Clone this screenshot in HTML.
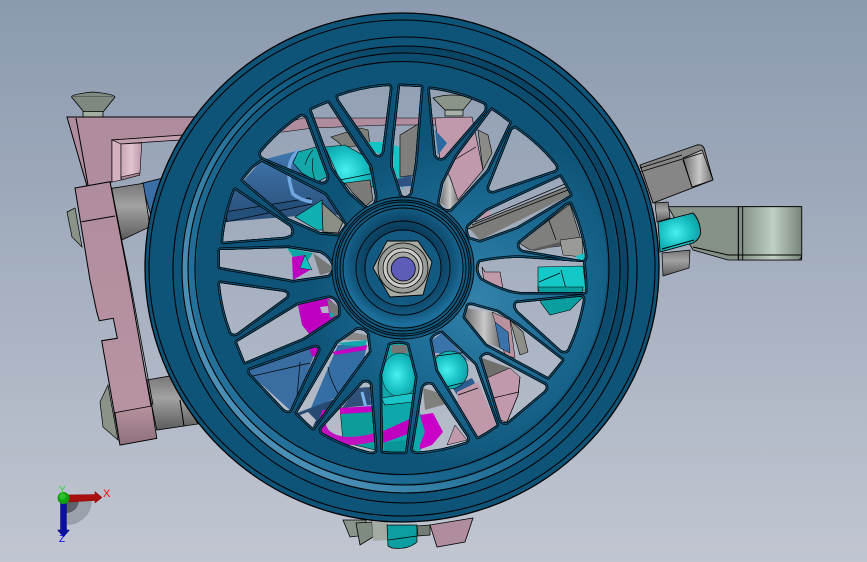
<!DOCTYPE html>
<html><head><meta charset="utf-8"><title>CAD wheel assembly</title>
<style>html,body{margin:0;padding:0;background:#a5afc0}svg{display:block}</style></head>
<body>
<svg xmlns="http://www.w3.org/2000/svg" width="867" height="562" viewBox="0 0 867 562">
<defs>
<linearGradient id="bg" x1="0" y1="0" x2="0" y2="1"><stop offset="0" stop-color="#8b9aaf"/><stop offset=".5" stop-color="#a6b0c0"/><stop offset="1" stop-color="#c1c6d1"/></linearGradient>
<linearGradient id="pink" x1="0" y1="0" x2="0" y2="1"><stop offset="0" stop-color="#b08d9e"/><stop offset="1" stop-color="#b893a4"/></linearGradient>
<linearGradient id="pinkb" x1="0" y1="0" x2="0" y2="1"><stop offset="0" stop-color="#b8929f"/><stop offset="1" stop-color="#8d6f7c"/></linearGradient>
<linearGradient id="tube" x1="0" y1="0" x2="1" y2="0"><stop offset="0" stop-color="#c9a6b6"/><stop offset=".5" stop-color="#e0c2d0"/><stop offset="1" stop-color="#bd9aa9"/></linearGradient>
<linearGradient id="cyl" x1="0" y1="0" x2="0" y2="1"><stop offset="0" stop-color="#777"/><stop offset=".4" stop-color="#a2a2a2"/><stop offset="1" stop-color="#5c5c5c"/></linearGradient>
<linearGradient id="greyH" x1="0" y1="0" x2="1" y2="0"><stop offset="0" stop-color="#6e6e6e"/><stop offset=".55" stop-color="#c8c8c8"/><stop offset="1" stop-color="#707070"/></linearGradient>
<linearGradient id="olive" x1="0" y1="0" x2="1" y2="0"><stop offset="0" stop-color="#7d8a80"/><stop offset=".55" stop-color="#bfcfc3"/><stop offset="1" stop-color="#78847a"/></linearGradient>
<linearGradient id="blue" x1="0" y1="0" x2="0" y2="1"><stop offset="0" stop-color="#3f78ae"/><stop offset="1" stop-color="#2a4d78"/></linearGradient>
<linearGradient id="band" gradientUnits="userSpaceOnUse" x1="170" y1="400" x2="560" y2="110"><stop offset=".18" stop-color="#4a8fb5"/><stop offset=".35" stop-color="#2f7ca3"/><stop offset=".6" stop-color="#0f5a80"/><stop offset=".8" stop-color="#0a4566"/></linearGradient>
<linearGradient id="band2" gradientUnits="userSpaceOnUse" x1="170" y1="400" x2="560" y2="110"><stop offset=".18" stop-color="#23719b"/><stop offset=".35" stop-color="#1a668e"/><stop offset=".6" stop-color="#0e5478"/><stop offset=".8" stop-color="#0c4c6e"/></linearGradient>
<radialGradient id="face" gradientUnits="userSpaceOnUse" cx="480" cy="300" r="170"><stop offset="0" stop-color="#3482ab"/><stop offset=".5" stop-color="#1c6c95"/><stop offset="1" stop-color="#0e5478"/></radialGradient>
<radialGradient id="hub" gradientUnits="userSpaceOnUse" cx="403" cy="262" r="62"><stop offset=".55" stop-color="#0a3c5b"/><stop offset=".85" stop-color="#12587f"/><stop offset="1" stop-color="#1d6f9b"/></radialGradient>
<radialGradient id="ball" cx=".42" cy=".5" r=".6"><stop offset="0" stop-color="#48f0f0"/><stop offset=".6" stop-color="#18c0c4"/><stop offset="1" stop-color="#0e9ea2"/></radialGradient>
<radialGradient id="nut" cx=".5" cy=".5" r=".5"><stop offset="0" stop-color="#e0e0dd"/><stop offset="1" stop-color="#909590"/></radialGradient>
<clipPath id="wheelClip"><path clip-rule="evenodd" d="M145 267.5A257 254.5 0 1 1 659 267.5A257 254.5 0 1 1 145 267.5Z
M261.7 151.7A183 183 0 0 1 300 117Q304 115 306 120L326.7 176Q327 182 321 182L264 158Q259 155 261.7 151.7Z
M311.5 110A183 183 0 0 1 328 103L370 167L375 197Q374 207 366 206L350 192L333 168Z
M338 96.5A183 183 0 0 1 389 86L390 88L382 151Q380 157 376 154L339 100Z
M400 86L421 87L415 163L410 193Q406 198 402 195L392.7 166L393.3 147Z
M430 89A183 183 0 0 1 483 104Q486 106 484 111L444 157Q439 160 436 155L430 92Z
M491.7 110A183 183 0 0 1 509.3 122.7L486.7 170L459.3 200L450 209.3Q443 210 439.3 203L443.3 183.3L456.7 156.7Z
M515 128.3A183 183 0 0 1 555 165Q557 168 555 170L493.3 191Q488 191 489.3 186.7L512 130Z
M560 177A183 183 0 0 1 570 195L516.7 226.7L480 240L470 237Q467 232 468.3 226.7L487 211L510 200Z
M570 204A183 183 0 0 1 585 256Q585 261 581 260L523 250Q518 247 520 243L567 205Z
M480 262Q500 258 520 257.7L583 262A183 183 0 0 1 585 292L520 292Q503 290 482 278Q476 270 480 262Z
M516.7 303L577 297Q583 296 583 299A183 183 0 0 1 567 350Q564 352 561 350L518 311Q514 306 516.7 303Z
M468 306Q470 304 475 306L497 312L517 325L562 360L548 377L487 344L465 317Z
M481.7 358Q484 354 489 355L545 385Q547 388 544 391L507 422Q502 423 501 420Z
M432 340Q434 335 441.7 333L475 365L496.7 425A183 183 0 0 1 478 436.7L438 370Z
M423 388Q426 383 432 385L467 437Q468 441 465 442A183 183 0 0 1 417 451.7Q412 451 413 448Z
M390 345Q398 342 407 345L415 377L405 451.7A183 183 0 0 1 383 451L382 375Z
M322 428L363 383Q368 381 370 385L375 450Q375 452 370 451.7A183 183 0 0 1 323 433Q320 431 322 428Z
M338 343L356.7 330Q364 329 367 334L369 351L313 428L297 413Z
M250 370L313 347.7Q318 346 318 350L290 410Q287 412 283 408L250 373Z
M237 342L298 305L328 298Q335 298 338 306L338 315L303 338L245 362Z
M220 283L283 291.7Q289 293 286 297L237 333Q233 335 231 332A183 183 0 0 1 220 285Z
M220 250L288 248L320 253Q330 258 332 267Q332 272 328 275L293 280L220 267Z
M235 190L290 226.7Q293 232 290 235L285 236.7L223 241.7A183 183 0 0 1 235 190Z
M243 180A183 183 0 0 1 253 168L261.7 161.7L325 195L345 225L338 234L320 232L288 218Z"/></clipPath>
<path id="holes" d="M261.7 151.7A183 183 0 0 1 300 117Q304 115 306 120L326.7 176Q327 182 321 182L264 158Q259 155 261.7 151.7Z
M311.5 110A183 183 0 0 1 328 103L370 167L375 197Q374 207 366 206L350 192L333 168Z
M338 96.5A183 183 0 0 1 389 86L390 88L382 151Q380 157 376 154L339 100Z
M400 86L421 87L415 163L410 193Q406 198 402 195L392.7 166L393.3 147Z
M430 89A183 183 0 0 1 483 104Q486 106 484 111L444 157Q439 160 436 155L430 92Z
M491.7 110A183 183 0 0 1 509.3 122.7L486.7 170L459.3 200L450 209.3Q443 210 439.3 203L443.3 183.3L456.7 156.7Z
M515 128.3A183 183 0 0 1 555 165Q557 168 555 170L493.3 191Q488 191 489.3 186.7L512 130Z
M560 177A183 183 0 0 1 570 195L516.7 226.7L480 240L470 237Q467 232 468.3 226.7L487 211L510 200Z
M570 204A183 183 0 0 1 585 256Q585 261 581 260L523 250Q518 247 520 243L567 205Z
M480 262Q500 258 520 257.7L583 262A183 183 0 0 1 585 292L520 292Q503 290 482 278Q476 270 480 262Z
M516.7 303L577 297Q583 296 583 299A183 183 0 0 1 567 350Q564 352 561 350L518 311Q514 306 516.7 303Z
M468 306Q470 304 475 306L497 312L517 325L562 360L548 377L487 344L465 317Z
M481.7 358Q484 354 489 355L545 385Q547 388 544 391L507 422Q502 423 501 420Z
M432 340Q434 335 441.7 333L475 365L496.7 425A183 183 0 0 1 478 436.7L438 370Z
M423 388Q426 383 432 385L467 437Q468 441 465 442A183 183 0 0 1 417 451.7Q412 451 413 448Z
M390 345Q398 342 407 345L415 377L405 451.7A183 183 0 0 1 383 451L382 375Z
M322 428L363 383Q368 381 370 385L375 450Q375 452 370 451.7A183 183 0 0 1 323 433Q320 431 322 428Z
M338 343L356.7 330Q364 329 367 334L369 351L313 428L297 413Z
M250 370L313 347.7Q318 346 318 350L290 410Q287 412 283 408L250 373Z
M237 342L298 305L328 298Q335 298 338 306L338 315L303 338L245 362Z
M220 283L283 291.7Q289 293 286 297L237 333Q233 335 231 332A183 183 0 0 1 220 285Z
M220 250L288 248L320 253Q330 258 332 267Q332 272 328 275L293 280L220 267Z
M235 190L290 226.7Q293 232 290 235L285 236.7L223 241.7A183 183 0 0 1 235 190Z
M243 180A183 183 0 0 1 253 168L261.7 161.7L325 195L345 225L338 234L320 232L288 218Z"/>
</defs>

<rect width="867" height="562" fill="url(#bg)"/>

<!-- gizmo -->
<path d="M67 500L92 500A25 25 0 0 1 67 525Z" fill="#8f969f" opacity=".75"/>
<path d="M66 500L79 500A13 13 0 0 1 66 513Z" fill="#5e6268"/>
<path d="M68 495L95 494.5L95 491.5L102 497.5L95 503L95 500.5L68 502Z" fill="#a80f0f" stroke="#8c0000" stroke-width=".5"/>
<path d="M60.5 502L66.5 502L66.5 530L69.5 530L63.5 537L57.5 530L60.5 530Z" fill="#0a0f9e" stroke="#000a80" stroke-width=".5"/>
<circle cx="63.5" cy="498" r="6" fill="#12a012"/>
<circle cx="62.5" cy="496.5" r="3.2" fill="#2ac22a"/>
<text x="103" y="497" font-family="Liberation Sans, sans-serif" font-size="11" fill="#ff0000">X</text>
<text x="59" y="493" font-family="Liberation Sans, sans-serif" font-size="10" fill="#22dd22">Y</text>
<text x="59" y="542" font-family="Liberation Sans, sans-serif" font-size="10" fill="#0000ff">Z</text>

<!-- left screw -->
<path d="M83 111L103 111L103 117L83 117Z" fill="#a3aea4" stroke="#000" stroke-width=".8"/>
<path d="M71.5 97Q72 94 93 92Q114 94 115 97L103.5 111.5L83.5 111.5Z" fill="#7f897f" stroke="#000" stroke-width=".8"/>
<path d="M73 96.5L113 96.5" stroke="#555" stroke-width=".8"/>

<!-- left bolts -->
<path d="M67 212L75 208L82 247L72 237Z" fill="#8b9389" stroke="#000" stroke-width=".7"/>
<path d="M100 402L108 385L118 440L103 427Z" fill="#8b9389" stroke="#000" stroke-width=".7"/>

<!-- blue wedge + cylinders -->
<path d="M141.7 183.3L161.7 178.3L151.7 218Z" fill="#3a6fa6" stroke="#000" stroke-width=".8"/>
<path d="M111.7 188.3L143.3 183.3L150 226.7L121.7 240Z" fill="url(#cyl)" stroke="#000" stroke-width=".8"/>
<path d="M146.7 380L170 376L198 424L156.7 430Z" fill="url(#cyl)" stroke="#000" stroke-width=".8"/>
<path d="M180 400L184 426" stroke="#000"/>

<!-- pink bracket -->
<path d="M67 117L240 117L190 136L112 140L112 182L87 186Z" fill="#b08d9e" stroke="#000" stroke-width="1"/>
<path d="M76 118L88 185" stroke="#000" fill="none"/>
<path d="M112 140L183 135L180 140L120 144Z" fill="#c2a0af" stroke="#000" stroke-width=".8"/>
<path d="M112 140L121 144L121 180L112 182Z" fill="#d4b0c0" stroke="#000" stroke-width=".6"/>
<path d="M121 144L141.7 143L140 173L121 178Z" fill="url(#tube)" stroke="#000" stroke-width=".6"/>
<path d="M121 177L139 173L140 175L122 180Z" fill="#a58593" stroke="#000" stroke-width=".6"/>

<!-- pink plate -->
<path d="M75 188L110 181.7L127 270L156.7 438.3L120 445L103.3 350L101.7 340.7L117.3 338.3L113.3 318.3L99.3 320.7L96.7 311.7L90 280Z" fill="url(#pink)" stroke="#000" stroke-width="1"/>
<path d="M81.7 221.7L115 216" stroke="#000" fill="none"/>
<path d="M115 412.7L120 445L156.7 438.3L151.7 406Z" fill="url(#pinkb)" stroke="#000" stroke-width=".8"/>
<path d="M110 181.7L130 281L153 405" stroke="#000" stroke-width=".8" fill="none"/>

<!-- right arm -->
<path d="M668 206.7L801.7 206.7L801.7 260L728 260L693 250Z" fill="#869188" stroke="#000" stroke-width=".8"/>
<path d="M738.3 206.7L801.7 206.7L801.7 255Q801 260 798 260L738.3 260Z" fill="url(#olive)" stroke="#000" stroke-width=".8"/>
<path d="M738.3 206.7L738.3 260M742.7 206.7L742.7 260M693 247L728 255L801 255" stroke="#000" stroke-width=".9" fill="none"/>
<path d="M655 203L668 202L670 218L657 222Z" fill="url(#cyl)" stroke="#000" stroke-width=".7"/>
<path d="M662 253L690 250L689 268L663 276Z" fill="url(#cyl)" stroke="#000" stroke-width=".7"/>
<path d="M640 165L697 145Q702 144 704 148L713 180L653 203Z" fill="#868686" stroke="#000" stroke-width=".9"/>
<path d="M683 158L702 150L713 180L692 187Z" fill="url(#greyH)" stroke="#000" stroke-width=".7"/>
<path d="M640 168L682 155M640 172L702 153M683 160L692 187" stroke="#000" stroke-width=".9" fill="none"/>
<path d="M658 222L693 213Q700 220 700.7 233Q699 240 693 243L660 252Z" fill="url(#ball)" stroke="#000" stroke-width=".9"/>
<path d="M662 249L694 240" stroke="#000" fill="none"/>

<!-- bottom parts -->
<path d="M343 520L366 520L366 535L350 537Z" fill="#8b948b" stroke="#000" stroke-width=".8"/>
<path d="M356 523L372 522L373 537L360 545Z" fill="#7f8a80" stroke="#000" stroke-width=".8"/>
<path d="M372 522L388 522L388 540L373 541Z" fill="#a3aba3"/>
<path d="M387 525L417 525L417 542Q408 550 392 548L388 546Z" fill="#0c9ea0" stroke="#000" stroke-width=".7"/>
<path d="M388 540L417 536" stroke="#000" fill="none" stroke-width=".7"/>
<path d="M417 526L430 525L430 535L418 536Z" fill="#747d75" stroke="#000" stroke-width=".7"/>
<path d="M430 525L473 518L465 542L437 547Z" fill="#b08d9e" stroke="#000" stroke-width=".8"/>

<!-- visible through the windows -->
<path d="M250 133L303 118L440 118L440 125L385 125L313 128L283 132Z" fill="#b08d9e" stroke="#000" stroke-width=".6"/>
<path d="M224 222L235 190L262 160L300 150L345 215L310 215Z" fill="url(#blue)"/>
<path d="M226.7 211.7L310 198L312 204L226.7 221.7Z" fill="#234f7a" stroke="#000" stroke-width=".7"/>
<path d="M300 150Q282 162 293 194Q300 200 312 202" fill="none" stroke="#6fa5e0" stroke-width="3.5"/>
<path d="M298 152L323 145L327 177L317 182L302 173L293 163Z" fill="#14a8aa" stroke="#000" stroke-width=".6"/>
<path d="M305 165Q308 155 313 150M315 180Q311 170 313 158" fill="none" stroke="#000" stroke-width=".6"/>
<path d="M295 217L322 200L323 207L325 230L317 230Z" fill="#10b0b2" stroke="#000" stroke-width=".6"/>
<path d="M322 203L343 222L338 233L323 232Z" fill="#8a8f85" stroke="#000" stroke-width=".7"/>
<path d="M331 137L360 128L368 130L370 145L343 147L338 142Z" fill="#7f807a" stroke="#000" stroke-width=".6"/>
<path d="M325 147L345 145L368 158L370 170L375 185L360 195L340 180Z" fill="url(#ball)" stroke="#000" stroke-width=".6"/>
<path d="M345 183L370 180L373 200L366 206L353 193Z" fill="#7a7a78" stroke="#000" stroke-width=".6"/>
<path d="M340 180L375 173" stroke="#000" fill="none" stroke-width=".7"/>
<path d="M365 142L390 142L385 156L375 152Z" fill="#14c3c6"/>
<path d="M393 145L403 148L403 190L394 170Z" fill="#16c3c6"/>
<path d="M400 135L420 123L414 175L400 177Z" fill="#7e7e7c" stroke="#000" stroke-width=".6"/>
<path d="M393 180L412 175L411 186L395 187Z" fill="#2c5382"/>

<path d="M433 98Q452 92 473 98L463 110L445 110Z" fill="#8a9489" stroke="#000" stroke-width=".7"/>
<path d="M445 110L463 110L463 116L445 116Z" fill="#a6b0a6" stroke="#000" stroke-width=".7"/>
<path d="M435 118L472 117L483 170L458 200L450 177L440 160Z" fill="#c09aac" stroke="#000" stroke-width=".6"/>
<path d="M435 130L447 143L438 155Z" fill="#2a6aa0"/>
<path d="M447 173L458 200L450 209L440 203Z" fill="url(#greyH)"/>
<path d="M478 130L488 135L492 153L483 170Z" fill="#8a8a86" stroke="#000" stroke-width=".6"/>
<path d="M454 160L476 147" stroke="#000" fill="none" stroke-width=".7"/>

<path d="M480 215L490 210L490 216L482 219Z" fill="#c09aac"/>
<path d="M468 227L567 187L570 195L480 240Z" fill="#7c7c7a"/>
<path d="M475 222L565 184M472 225L566 187M468 229L568 190" stroke="#000" stroke-width=".7" fill="none"/>
<path d="M519 243L570 204L582 243L530 250Z" fill="#7f7f7d" stroke="#000" stroke-width=".6"/>
<path d="M548 218L556 240" stroke="#000" stroke-width=".7" fill="none"/>
<path d="M530 250L582 236L584 240L535 251Z" fill="#5a5a58"/>
<path d="M560 240L582 237L583 257L563 255Z" fill="#9a9a96" stroke="#000" stroke-width=".5"/>
<path d="M576 256L588 252L586 262L578 260Z" fill="#16c3c6"/>

<path d="M538 267L583 266L586 290L538 291Z" fill="#14c8c8" stroke="#000" stroke-width=".6"/>
<path d="M539 282L560 273M561 270L566 289" stroke="#000" stroke-width=".7" fill="none"/>
<path d="M482 267L485 272L500 272L503 289L484 282Z" fill="#c09aa8" stroke="#000" stroke-width=".6"/>
<path d="M538 287L583 287L582 298L570 310L550 315L541 303Z" fill="#0a9e9e" stroke="#000" stroke-width=".6"/>

<path d="M465 308L492 312L500 348L485 342L465 317Z" fill="url(#greyH)"/>
<path d="M492 312L510 320L515 358L505 355Z" fill="#b8929f" stroke="#000" stroke-width=".5"/>
<path d="M495 322L508 332L510 353L500 348Z" fill="#3a72aa" stroke="#000" stroke-width=".5"/>
<path d="M510 320L523 332L528 352L520 355Z" fill="#8f8f8a" stroke="#000" stroke-width=".6"/>

<path d="M482 358L510 368L507 377L487 378Z" fill="#6f6f6c"/>
<path d="M487 378L510 368L520 377L518 395L507 422L500 420Z" fill="#c09aac" stroke="#000" stroke-width=".5"/>
<path d="M493 398L519 392" stroke="#000" stroke-width=".7" fill="none"/>
<path d="M520 377L518 395L507 422" stroke="#000" stroke-width=".7" fill="none"/>

<path d="M432 340L442 333L470 362L458 355L435 353Z" fill="#3a72aa"/>
<path d="M452 387L472 378L475 383L457 395Z" fill="#2c5d90"/>
<path d="M457 392L478 382L497 425L478 437L458 410Z" fill="#bf98aa"/>
<path d="M458 395L478 388" stroke="#000" stroke-width=".7" fill="none"/>
<ellipse cx="450" cy="370" rx="18" ry="19" fill="url(#ball)" stroke="#000" stroke-width=".6"/>
<path d="M436 356L468 352M442 388L462 383" stroke="#000" stroke-width=".7" fill="none"/>

<path d="M423 388L436 392L446 404L425 410Z" fill="#7f7f7c"/>
<path d="M413 448L420 412L426 435L420 452Z" fill="#0ea5a5"/>
<path d="M420 415L433 413L443 432L432 445L418 450L425 432Z" fill="#c800c8"/>
<path d="M447 445L455 425L467 440Z" fill="#c09aac" stroke="#000" stroke-width=".5"/>

<rect x="380" y="343" width="40" height="110" fill="#0fa8aa"/>
<path d="M392 345L406 345L408 353L392 353Z" fill="#777"/>
<ellipse cx="400" cy="375" rx="18" ry="22" fill="url(#ball)" stroke="#000" stroke-width=".5"/>
<path d="M381 398L414 393L413 402L385 405Z" fill="#1ac4c8" stroke="#000" stroke-width=".6"/>
<path d="M381 432L412 418L408 434L383 443Z" fill="#c000c0"/>
<path d="M384 443L405 440L405 452L384 452Z" fill="#0a9698"/>

<path d="M357 388L370 387L371 405L342 408Z" fill="#30507a"/>
<path d="M362 392L366 408" stroke="#7ab2ea" stroke-width="3" fill="none"/>
<path d="M340 408L373 408L375 450L343 442Z" fill="#0c9c9c" stroke="#000" stroke-width=".5"/>
<path d="M340 408L373 406L373 412L340 414Z" fill="#c400c4"/>
<path d="M322 425Q325 440 350 441Q370 440 380 435" fill="none" stroke="#c010c0" stroke-width="8"/>

<path d="M310 410L338 345L367 345L360 378L335 398Z" fill="#356ea5"/>
<path d="M297 413L337 398L333 405L312 428Z" fill="#274a72"/>
<path d="M300 415L312 428L316 420L308 412Z" fill="#b8bdc9"/>
<path d="M318 425L322 410L326 410L318 428Z" fill="#c800c8"/>
<path d="M350 332L367 335L368 340L343 340Z" fill="#888"/>
<path d="M338 343L367 340L365 347L342 345Z" fill="#10a8aa"/>
<path d="M332 352L367 345L366 350L335 355Z" fill="#c400c4"/>
<path d="M328 367Q330 380 340 397" stroke="#000" stroke-width=".7" fill="none"/>

<path d="M250 370L318 345L292 412L250 374Z" fill="#3a6ea2"/>
<path d="M309 348L318 348L317 357L312 356Z" fill="#c000c0"/>
<path d="M253 376L310 363M300 362L296 409" stroke="#000" stroke-width=".7" fill="none"/>

<path d="M298 305L328 298L338 307L338 315L310 335L302 325Z" fill="#c000c0"/>
<path d="M327 299L338 306L338 315L331 318Z" fill="#777"/>
<path d="M320 307L328 306L329 313L322 313Z" fill="#b0b6c4"/>
<path d="M329 313L333 313L333 317L330 317Z" fill="#10a8aa"/>

<path d="M287 248L313 253L307 262L293 257Z" fill="#0ea5a5"/>
<path d="M292 257L305 255L310 270L293 280Z" fill="#c000c0"/>
<path d="M313 253L331 266L331 272L320 275L316 262Z" fill="#777"/>
<path d="M305 255L312 270L300 268Z" fill="#10c0c2" stroke="#000" stroke-width=".4"/>

<!-- wheel -->
<g clip-path="url(#wheelClip)">
  <rect x="140" y="8" width="525" height="520" fill="#0e5478"/>
  <ellipse cx="402" cy="268" rx="205" ry="204" fill="url(#face)"/>
  <ellipse cx="404.5" cy="269.3" rx="219.5" ry="219.7" fill="none" stroke="url(#band)" stroke-width="7"/>
  <ellipse cx="403" cy="268.5" rx="211" ry="211" fill="none" stroke="url(#band2)" stroke-width="8"/>
  <g fill="none" stroke="#000" stroke-width="1.1">
    <ellipse cx="402" cy="268" rx="253" ry="248"/>
    <ellipse cx="405" cy="270" rx="232" ry="233"/>
    <ellipse cx="405" cy="269.5" rx="223" ry="223.5"/>
    <ellipse cx="404" cy="269" rx="216" ry="216"/>
    <ellipse cx="402" cy="268" rx="207" ry="206.5"/>
  </g>
  <use href="#holes" fill="none" stroke="#000" stroke-width="5" stroke-linejoin="round"/>
  <use href="#holes" fill="none" stroke="#0e5478" stroke-width="3.6" stroke-linejoin="round"/>
  <use href="#holes" fill="none" stroke="#000" stroke-width="1.4" stroke-linejoin="round"/>
</g>
<ellipse cx="402" cy="267.5" rx="257" ry="254.5" fill="none" stroke="#000" stroke-width="1.3"/>

<!-- hub -->
<circle cx="403" cy="268" r="71" fill="#11597f" stroke="#000" stroke-width=".9"/>
<g fill="none" stroke="#000" stroke-width=".9">
  <circle cx="403" cy="268" r="68"/>
  <circle cx="403" cy="268" r="66"/>
  <circle cx="403" cy="268" r="63"/>
</g>
<circle cx="403" cy="268" r="60" fill="url(#hub)" stroke="#000" stroke-width=".9"/>
<circle cx="403" cy="268" r="47" fill="none" stroke="#000" stroke-width=".9"/>
<circle cx="403" cy="268" r="38" fill="#125a82" stroke="#000" stroke-width=".9"/>
<path d="M387 241L418 241L432 262L423 295L390 297L373 268Z" fill="#a7aca5" stroke="#000" stroke-width=".9"/>
<circle cx="403" cy="268" r="25" fill="url(#nut)" stroke="#000" stroke-width=".8"/>
<circle cx="403" cy="268" r="20" fill="#c9c9c6" stroke="#000" stroke-width=".8"/>
<circle cx="403" cy="268" r="16" fill="#a9a9a6" stroke="#000" stroke-width=".8"/>
<circle cx="403.3" cy="269" r="12" fill="#5d5cb8" stroke="#000" stroke-width=".8"/>
</svg>
</body></html>
